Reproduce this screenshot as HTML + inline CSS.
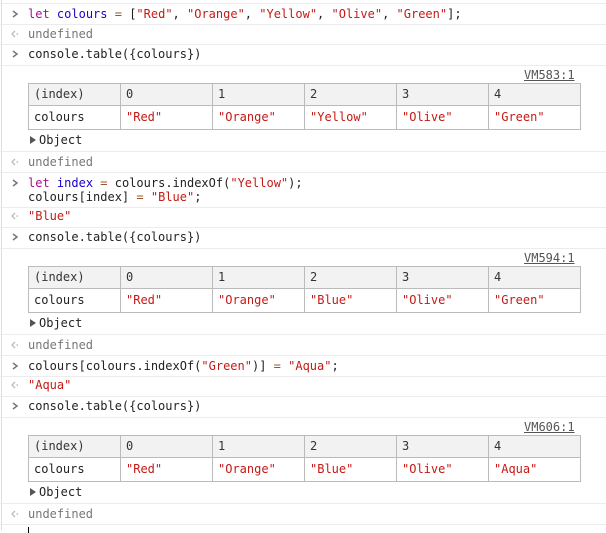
<!DOCTYPE html><html><head><style>
body{margin:0;width:606px;height:530px;background:#fff;position:relative;overflow:hidden;font-family:"DejaVu Sans Mono","Liberation Mono",monospace;font-size:12px;color:#222}
.l{position:absolute;left:28px;line-height:14px;white-space:pre}
.s{position:absolute;left:0;width:606px;height:1px;background:#ececec}
.p{position:absolute;left:10px;width:10px;height:10px}
.r{color:#c41a16}.k{color:#aa0d91}.v{color:#1c00cf}.o{color:#a0522d}.g{color:#777}
.vm{position:absolute;left:524px;color:#555;text-decoration:underline;line-height:14px}
table{position:absolute;left:28px;border-collapse:collapse;width:553px;font-size:12px}
td{border:1px solid #bbb;width:92px;height:24px;padding:0 0 1px 5px;box-sizing:border-box;white-space:pre}
tr:first-child td{background:#f2f2f2;height:22px}
td:not(:first-child){color:#c41a16}tr:first-child td{color:#333}
.ob{position:absolute;left:30px;color:#222;line-height:14px}
.ob:before{content:"";display:inline-block;border-left:6px solid #555;border-top:4px solid transparent;border-bottom:4px solid transparent;margin-right:3px}
#bl{position:absolute;left:1px;top:0;width:1px;height:530px;background:#ddd}
</style></head><body>
<svg width="0" height="0" style="position:absolute"><defs>
<symbol id="gt" viewBox="0 0 10 10"><path d="M3 2L7 5L3 8" fill="none" stroke="#777" stroke-width="1.5"/></symbol>
<symbol id="lt" viewBox="0 0 10 10"><path d="M5 2L2 5L5 8" fill="none" stroke="#bbb" stroke-width="1.3"/><rect x="6.5" y="4.3" width="1.5" height="1.5" fill="#bbb"/></symbol>
</defs></svg>
<div id="bl"></div>
<div class="s" style="top:3px"></div>
<svg class="p" style="top:9px"><use href="#gt"/></svg><div class="l" style="top:7px"><span class="k">let</span> <span class="v">colours</span> <span class="o">=</span> [<span class="r">"Red"</span>, <span class="r">"Orange"</span>, <span class="r">"Yellow"</span>, <span class="r">"Olive"</span>, <span class="r">"Green"</span>];</div>
<div class="s" style="top:24px"></div>
<svg class="p" style="top:29px"><use href="#lt"/></svg><div class="l g" style="top:27px">undefined</div>
<div class="s" style="top:44px"></div>
<svg class="p" style="top:49px"><use href="#gt"/></svg><div class="l" style="top:47px">console.table({colours})</div>
<div class="s" style="top:65px"></div>
<div class="vm" style="top:68px">VM583:1</div>
<table style="top:83px"><tr><td>(index)</td><td>0</td><td>1</td><td>2</td><td>3</td><td>4</td></tr><tr><td style="color:#222">colours</td><td>"Red"</td><td>"Orange"</td><td>"Yellow"</td><td>"Olive"</td><td>"Green"</td></tr></table>
<div class="ob" style="top:133px">Object</div>
<div class="s" style="top:151px"></div>
<svg class="p" style="top:157px"><use href="#lt"/></svg><div class="l g" style="top:155px">undefined</div>
<div class="s" style="top:172px"></div>
<svg class="p" style="top:178px"><use href="#gt"/></svg><div class="l" style="top:176px"><span class="k">let</span> <span class="v">index</span> <span class="o">=</span> colours.indexOf(<span class="r">"Yellow"</span>);
colours[index] <span class="o">=</span> <span class="r">"Blue"</span>;</div>
<div class="s" style="top:207px"></div>
<svg class="p" style="top:211px"><use href="#lt"/></svg><div class="l r" style="top:209px">"Blue"</div>
<div class="s" style="top:227px"></div>
<svg class="p" style="top:232px"><use href="#gt"/></svg><div class="l" style="top:230px">console.table({colours})</div>
<div class="s" style="top:248px"></div>
<div class="vm" style="top:251px">VM594:1</div>
<table style="top:266px"><tr><td>(index)</td><td>0</td><td>1</td><td>2</td><td>3</td><td>4</td></tr><tr><td style="color:#222">colours</td><td>"Red"</td><td>"Orange"</td><td>"Blue"</td><td>"Olive"</td><td>"Green"</td></tr></table>
<div class="ob" style="top:316px">Object</div>
<div class="s" style="top:334px"></div>
<svg class="p" style="top:340px"><use href="#lt"/></svg><div class="l g" style="top:338px">undefined</div>
<div class="s" style="top:355px"></div>
<svg class="p" style="top:361px"><use href="#gt"/></svg><div class="l" style="top:359px">colours[colours.indexOf(<span class="r">"Green"</span>)] <span class="o">=</span> <span class="r">"Aqua"</span>;</div>
<div class="s" style="top:376px"></div>
<svg class="p" style="top:380px"><use href="#lt"/></svg><div class="l r" style="top:378px">"Aqua"</div>
<div class="s" style="top:396px"></div>
<svg class="p" style="top:401px"><use href="#gt"/></svg><div class="l" style="top:399px">console.table({colours})</div>
<div class="s" style="top:417px"></div>
<div class="vm" style="top:420px">VM606:1</div>
<table style="top:435px"><tr><td>(index)</td><td>0</td><td>1</td><td>2</td><td>3</td><td>4</td></tr><tr><td style="color:#222">colours</td><td>"Red"</td><td>"Orange"</td><td>"Blue"</td><td>"Olive"</td><td>"Aqua"</td></tr></table>
<div class="ob" style="top:485px">Object</div>
<div class="s" style="top:503px"></div>
<svg class="p" style="top:509px"><use href="#lt"/></svg><div class="l g" style="top:507px">undefined</div>
<div class="s" style="top:524px"></div>
<div style="position:absolute;left:28px;top:527px;width:1px;height:6px;background:#000"></div>
</body></html>
